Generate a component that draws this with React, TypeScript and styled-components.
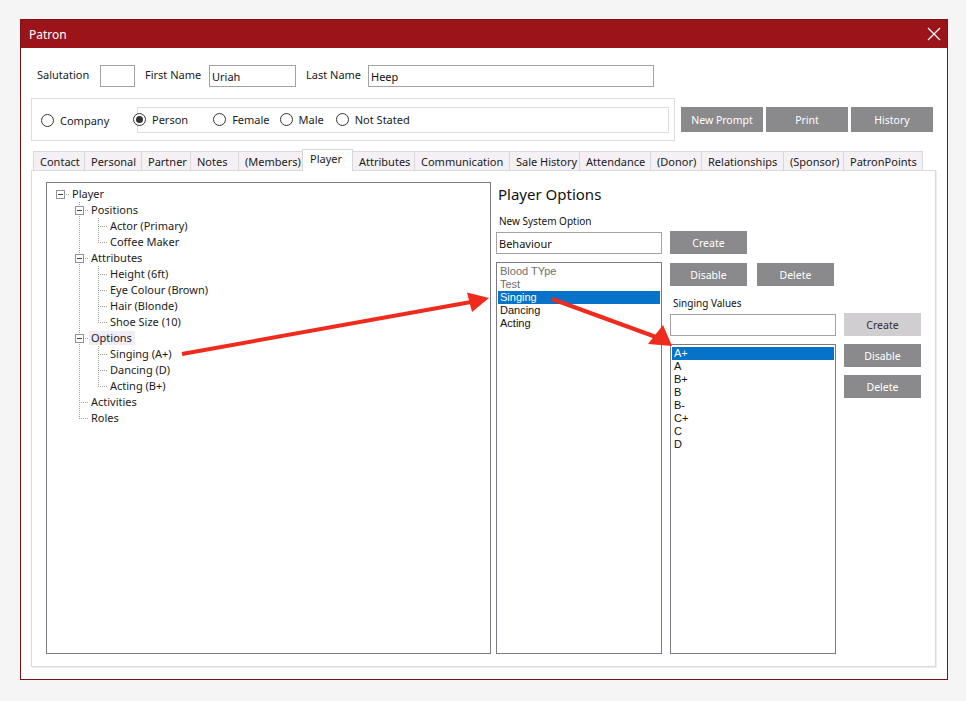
import React from "react";
import styled, { createGlobalStyle } from "styled-components";

const GlobalStyle = createGlobalStyle`
  html, body {
    margin: 0;
    padding: 0;
    background: #f5f5f5;
  }
  body {
    font-family: "Noto Sans", "Open Sans", sans-serif;
    font-size: 11px;
    color: #1b1b1b;
  }
  * {
    box-sizing: border-box;
  }
`;

type TreeNode = { label: string; hl?: boolean; children?: TreeNode[] };

const TREE: TreeNode = {
  label: "Player",
  children: [
    { label: "Positions", children: [{ label: "Actor (Primary)" }, { label: "Coffee Maker" }] },
    {
      label: "Attributes",
      children: [
        { label: "Height (6ft)" },
        { label: "Eye Colour (Brown)" },
        { label: "Hair (Blonde)" },
        { label: "Shoe Size (10)" },
      ],
    },
    {
      label: "Options",
      hl: true,
      children: [{ label: "Singing (A+)" }, { label: "Dancing (D)" }, { label: "Acting (B+)" }],
    },
    { label: "Activities" },
    { label: "Roles" },
  ],
};

type FlatRow = {
  label: string;
  level: number;
  hasKids: boolean;
  last: boolean;
  rails: boolean[];
  hl?: boolean;
};

// rails[k] = does the ancestor at level k+1 have a sibling below it
function flatten(node: TreeNode, level: number, last: boolean, rails: boolean[], out: FlatRow[]) {
  const kids = node.children || [];
  out.push({ label: node.label, level, hasKids: kids.length > 0, last, rails, hl: node.hl });
  kids.forEach((c, i) => {
    flatten(c, level + 1, i === kids.length - 1, level >= 1 ? [...rails, !last] : rails, out);
  });
}

const TABS = [
  { label: "Contact", w: 51 },
  { label: "Personal", w: 57 },
  { label: "Partner", w: 49 },
  { label: "Notes", w: 48 },
  { label: "(Members)", w: 64 },
  { label: "Player", w: 50, active: true },
  { label: "Attributes", w: 62 },
  { label: "Communication", w: 95 },
  { label: "Sale History", w: 70 },
  { label: "Attendance", w: 71 },
  { label: "(Donor)", w: 51 },
  { label: "Relationships", w: 82 },
  { label: "(Sponsor)", w: 60 },
  { label: "PatronPoints", w: 79 },
];

const OPTIONS = [
  { label: "Blood TYpe", muted: true },
  { label: "Test", muted: true },
  { label: "Singing", selected: true },
  { label: "Dancing" },
  { label: "Acting" },
];

const VALUES = ["A+", "A", "B+", "B", "B-", "C+", "C", "D"];

const Page = styled.div`
  position: relative;
  width: 966px;
  height: 701px;
  padding: 19px 0 0 20px;
`;

const Window = styled.div`
  width: 928px;
  height: 661px;
  border: 1px solid #7d1116;
  background: #fff;
  display: flex;
  flex-direction: column;
`;

const TitleBar = styled.div`
  height: 28px;
  flex-shrink: 0;
  background: #9b141a;
  color: #fff;
  font-size: 12px;
  display: flex;
  align-items: center;
  justify-content: space-between;
  padding: 0 6px 0 8px;
`;

const FormRow = styled.div`
  display: flex;
  align-items: center;
  gap: 10px;
  margin-top: 17px;
  padding-left: 16px;
`;

const FieldLabel = styled.span<{ $w: number }>`
  width: ${({ $w }) => $w}px;
  white-space: nowrap;
  line-height: 14px;
  margin-top: -3px;
`;

const TextBox = styled.input<{ $w: number }>`
  width: ${({ $w }) => $w}px;
  height: 22px;
  border: 1px solid #a3a3a3;
  padding: 0 2px;
  font-family: inherit;
  font-size: 11px;
  color: #111;
  outline: none;
  background: #fff;
`;

const ContactRow = styled.div`
  display: flex;
  align-items: center;
  gap: 6px;
  margin: 11px 0 0 10px;
`;

const TypeBox = styled.div`
  width: 644px;
  height: 43px;
  border: 1px solid #dcdcdc;
  display: flex;
  align-items: center;
  padding: 0 5px 0 9px;
`;

const GenderBox = styled.div`
  width: 532px;
  height: 26px;
  margin-left: auto;
  border: 1px solid #dcdcdc;
  display: flex;
  align-items: center;
`;

const RadioOption = styled.label<{ $ml?: number; $dy?: number }>`
  display: flex;
  align-items: center;
  gap: 6px;
  margin-left: ${({ $ml = 0 }) => $ml}px;
  margin-top: ${({ $dy = 0 }) => $dy}px;
  white-space: nowrap;
`;

const RadioDot = styled.span<{ $on?: boolean }>`
  width: 13px;
  height: 13px;
  border-radius: 50%;
  border: 1px solid #333;
  background: #fff;
  display: flex;
  align-items: center;
  justify-content: center;
  &::after {
    content: "";
    width: 7px;
    height: 7px;
    border-radius: 50%;
    background: ${({ $on }) => ($on ? "#333" : "transparent")};
  }
`;

const HeaderButtons = styled.div`
  display: flex;
  gap: 3px;
`;

const GrayButton = styled.button<{ $w?: number; $h?: number; $light?: boolean }>`
  width: ${({ $w = 77 }) => $w}px;
  height: ${({ $h = 23 }) => $h}px;
  border: none;
  padding: 0;
  background: ${({ $light }) => ($light ? "#d0ced0" : "#8a898c")};
  color: ${({ $light }) => ($light ? "#333" : "#fff")};
  font-family: inherit;
  font-size: 10.5px;
  flex-shrink: 0;
`;

const TabStrip = styled.div`
  display: flex;
  align-items: flex-end;
  height: 21px;
  margin: 8px 0 0 12px;
  position: relative;
  z-index: 1;
`;

const Tab = styled.div<{ $w: number; $active?: boolean }>`
  width: ${({ $w }) => $w + 1}px;
  height: ${({ $active }) => ($active ? 22 : 19)}px;
  margin-bottom: ${({ $active }) => ($active ? -1 : 0)}px;
  border: 1px solid #d8d8da;
  border-bottom: none;
  background: ${({ $active }) => ($active ? "#fff" : "#f4f0f6")};
  position: relative;
  z-index: ${({ $active }) => ($active ? 2 : 1)};
  padding-left: ${({ $active }) => ($active ? 7 : 6)}px;
  line-height: ${({ $active }) => ($active ? 18 : 19)}px;
  white-space: nowrap;
  & + & {
    margin-left: -1px;
  }
`;

const Panel = styled.div`
  width: 905px;
  height: 497px;
  margin-left: 10px;
  border: 1px solid #dadada;
  box-shadow: 1px 1px 0 #ececec;
  display: flex;
  gap: 5px;
  padding: 11px 0 12px 14px;
`;

const TreeBox = styled.div`
  width: 445px;
  border: 1px solid #7b7b83;
  padding: 3px 0 0 4px;
`;

const TreeRow = styled.div`
  display: flex;
  align-items: center;
  height: 16px;
`;

const TreeLabel = styled.span<{ $hl?: boolean }>`
  padding: 0 3px 0 2px;
  line-height: 14px;
  white-space: nowrap;
  background: ${({ $hl }) => ($hl ? "#f1edf4" : "transparent")};
`;

const RightPane = styled.div`
  width: 425px;
  display: flex;
  flex-direction: column;
`;

const PaneTitle = styled.div`
  margin-top: 1px;
  padding-left: 2px;
  font-size: 15px;
  line-height: 22px;
  color: #111;
`;

const SmallLabel = styled.div<{ $mt: number }>`
  margin-top: ${({ $mt }) => $mt}px;
  padding-left: 3px;
  font-size: 10px;
  line-height: 14px;
  color: #111;
`;

const InputRow = styled.div`
  display: flex;
  align-items: flex-start;
  gap: 8px;
  margin-top: 3px;
  & > input {
    margin-top: 1px;
  }
`;

const Split = styled.div<{ $mt: number }>`
  flex: 1;
  display: flex;
  gap: 8px;
  margin-top: ${({ $mt }) => $mt}px;
`;

const ListBox = styled.div`
  width: 166px;
  border: 1px solid #7b7b83;
  padding: 2px 1px;
  flex-shrink: 0;
`;

const ListItem = styled.div<{ $muted?: boolean; $selected?: boolean }>`
  height: 13px;
  line-height: 13px;
  padding-left: 2px;
  overflow: hidden;
  white-space: nowrap;
  font-family: "Liberation Sans", Arial, sans-serif;
  font-size: 11px;
  color: ${({ $muted, $selected }) => ($selected ? "#fff" : $muted ? "#6e6e6e" : "#111")};
  background: ${({ $selected }) => ($selected ? "#0672c8" : "transparent")};
`;

const SubColumn = styled.div`
  flex: 1;
  display: flex;
  flex-direction: column;
`;

const ButtonRow = styled.div`
  display: flex;
  gap: 10px;
  margin-top: 1px;
`;

const ButtonStack = styled.div`
  display: flex;
  flex-direction: column;
  gap: 8px;
`;

const Overlay = styled.svg`
  position: absolute;
  left: 0;
  top: 0;
  pointer-events: none;
`;

const LINE = "#a0a0a0";

const Rail = ({ on }: { on: boolean }) => (
  <svg width="19" height="16" style={{ flexShrink: 0 }}>
    {on && <line x1="9.5" y1="0" x2="9.5" y2="16" stroke={LINE} strokeDasharray="1 1" />}
  </svg>
);

const Connector = ({ level, hasKids, last }: { level: number; hasKids: boolean; last: boolean }) => (
  <svg width="19" height="16" style={{ flexShrink: 0 }}>
    {level > 0 && (
      <line x1="9.5" y1="0" x2="9.5" y2={last ? 9 : 16} stroke={LINE} strokeDasharray="1 1" />
    )}
    <line x1={hasKids ? 15 : 11} y1="8.5" x2="19" y2="8.5" stroke={LINE} strokeDasharray="1 1" />
    {hasKids && (
      <>
        <rect x="5.5" y="4.5" width="8" height="8" fill="#fff" stroke="#939393" />
        <line x1="7" y1="8.5" x2="12" y2="8.5" stroke="#444" />
      </>
    )}
  </svg>
);

const Tree = () => {
  const rows: FlatRow[] = [];
  flatten(TREE, 0, true, [], rows);
  return (
    <TreeBox>
      {rows.map((r, i) => (
        <TreeRow key={i}>
          {r.level >= 1 && <Rail on={false} />}
          {r.rails.map((on, k) => (
            <Rail key={k} on={on} />
          ))}
          <Connector level={r.level} hasKids={r.hasKids} last={r.last} />
          <TreeLabel $hl={r.hl}>{r.label}</TreeLabel>
        </TreeRow>
      ))}
    </TreeBox>
  );
};

const Arrows = () => (
  <Overlay width="966" height="701" viewBox="0 0 966 701">
    <line x1="182" y1="354" x2="471" y2="302" stroke="#ee2b1c" strokeWidth="4" />
    <polygon points="489,298 467,292.5 472,312" fill="#ee2b1c" />
    <line x1="552" y1="299" x2="656" y2="337" stroke="#ee2b1c" strokeWidth="4" />
    <polygon points="672,346 648,344 663,325" fill="#ee2b1c" />
  </Overlay>
);

export default function App() {
  return (
    <Page>
      <GlobalStyle />
      <Window>
        <TitleBar>
          <span>Patron</span>
          <svg width="14" height="14" viewBox="0 0 14 14">
            <line x1="1" y1="1" x2="13" y2="13" stroke="#fff" strokeWidth="1.3" />
            <line x1="13" y1="1" x2="1" y2="13" stroke="#fff" strokeWidth="1.3" />
          </svg>
        </TitleBar>

        <FormRow>
          <FieldLabel $w={53}>Salutation</FieldLabel>
          <TextBox $w={35} readOnly defaultValue="" />
          <FieldLabel $w={54}>First Name</FieldLabel>
          <TextBox $w={87} readOnly defaultValue="Uriah" />
          <FieldLabel $w={52}>Last Name</FieldLabel>
          <TextBox $w={286} readOnly defaultValue="Heep" />
        </FormRow>

        <ContactRow>
          <TypeBox>
            <RadioOption $dy={2}>
              <RadioDot />
              Company
            </RadioOption>
            <GenderBox>
              <RadioOption $ml={-5}>
                <RadioDot $on />
                Person
              </RadioOption>
              <RadioOption $ml={25}>
                <RadioDot />
                Female
              </RadioOption>
              <RadioOption $ml={10}>
                <RadioDot />
                Male
              </RadioOption>
              <RadioOption $ml={12}>
                <RadioDot />
                Not Stated
              </RadioOption>
            </GenderBox>
          </TypeBox>
          <HeaderButtons>
            <GrayButton $w={82} $h={25}>New Prompt</GrayButton>
            <GrayButton $w={82} $h={25}>Print</GrayButton>
            <GrayButton $w={82} $h={25}>History</GrayButton>
          </HeaderButtons>
        </ContactRow>

        <TabStrip>
          {TABS.map((t) => (
            <Tab key={t.label} $w={t.w} $active={t.active}>
              {t.label}
            </Tab>
          ))}
        </TabStrip>

        <Panel>
          <Tree />
          <RightPane>
            <PaneTitle>Player Options</PaneTitle>
            <SmallLabel $mt={9}>New System Option</SmallLabel>
            <InputRow>
              <TextBox $w={166} readOnly defaultValue="Behaviour" />
              <GrayButton>Create</GrayButton>
            </InputRow>
            <Split $mt={8}>
              <ListBox>
                {OPTIONS.map((o) => (
                  <ListItem key={o.label} $muted={o.muted} $selected={o.selected}>
                    {o.label}
                  </ListItem>
                ))}
              </ListBox>
              <SubColumn>
                <ButtonRow>
                  <GrayButton>Disable</GrayButton>
                  <GrayButton>Delete</GrayButton>
                </ButtonRow>
                <SmallLabel $mt={10}>Singing Values</SmallLabel>
                <InputRow>
                  <TextBox $w={166} readOnly defaultValue="" />
                  <GrayButton $light>Create</GrayButton>
                </InputRow>
                <Split $mt={8}>
                  <ListBox>
                    {VALUES.map((v, i) => (
                      <ListItem key={v} $selected={i === 0}>
                        {v}
                      </ListItem>
                    ))}
                  </ListBox>
                  <ButtonStack>
                    <GrayButton>Disable</GrayButton>
                    <GrayButton>Delete</GrayButton>
                  </ButtonStack>
                </Split>
              </SubColumn>
            </Split>
          </RightPane>
        </Panel>
      </Window>
      <Arrows />
    </Page>
  );
}
